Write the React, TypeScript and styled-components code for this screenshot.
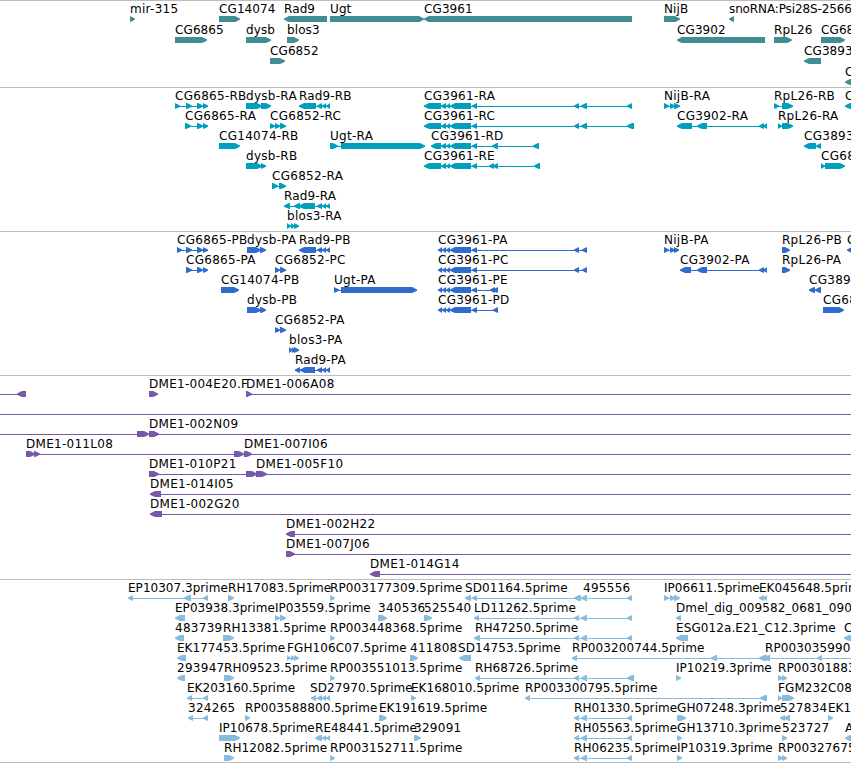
import { FC } from 'react';
import styled, { createGlobalStyle } from 'styled-components';

const Colors = {
    gene: '#408e93',
    transcript: '#009fbf',
    protein: '#306ccd',
    clone: '#7859a9',
    est: '#87bcde',
    border: '#bdbdbd',
    text: '#000000',
};

const GlobalStyle = createGlobalStyle`
body{
    margin:0;
    background-color:#ffffff;
    overflow:hidden;
}
`;

const BrowserWrapper = styled.div`
width:851px;
height:763px;
box-sizing:border-box;
display:flex;
flex-direction:column;
overflow:hidden;
border-bottom:1px solid ${Colors.border};
font-family:"DejaVu Sans", sans-serif;
font-size:12px;
color:${Colors.text};
`;
const TrackSection = styled.section<{ $gap: number }>`
display:flex;
flex-direction:column;
border-top:1px solid ${Colors.border};
padding-bottom:${p => p.$gap}px;
`;
const TrackRow = styled.div<{ $height: number }>`
position:relative;
height:${p => p.$height}px;
`;
const FeatureLabel = styled.span<{ $x: number; $spacing: number }>`
position:absolute;
top:1px;
left:${p => p.$x}px;
line-height:14px;
white-space:pre;
letter-spacing:${p => p.$spacing}px;
`;
const FeatureLane = styled.svg`
position:absolute;
top:15px;
left:0;
display:block;
`;

type Direction = '>' | '<';

// label, label x, direction, flat list of block start/end positions
type Feature = [string, number, Direction, number[]];

interface ITrack {
    color: string;
    rowHeight: number;
    gap: number;
    rows: Feature[][];
}

const rad9 = [317, 322, 322, 326, 326, 330];
const cg3961 = [441, 446, 446, 450, 450, 471, 472, 477];
const cg3961p = [438, 442, 442, 446, 446, 450, 450, 471, 472, 477];
const estTail = [574, 579, 581, 587, 627, 632];

const tracks: ITrack[] = [
    {
        color: Colors.gene,
        rowHeight: 21,
        gap: 2,
        rows: [
            [
                ['mir-315', 130, '>', [130, 135]],
                ['CG14074', 219, '>', [219, 240]],
                ['Rad9', 284, '<', [284, 327]],
                ['Ugt', 330, '>', [330, 424]],
                ['CG3961', 424, '<', [424, 632]],
                ['NijB', 664, '>', [664, 680]],
                ['snoRNA:Psi28S-2566', 729, '<', [729, 734]],
            ],
            [
                ['CG6865', 175, '>', [175, 207]],
                ['dysb', 246, '>', [246, 271]],
                ['blos3', 287, '>', [287, 299]],
                ['CG3902', 677, '<', [677, 765]],
                ['RpL26', 774, '>', [774, 792]],
                ['CG6876', 821, '>', [821, 845]],
            ],
            [
                ['CG6852', 270, '>', [270, 285]],
                ['CG3893', 804, '<', [804, 821]],
            ],
            [['CG3889', 845, '<', [845, 870]]],
        ],
    },
    {
        color: Colors.transcript,
        rowHeight: 20,
        gap: 3,
        rows: [
            [
                ['CG6865-RB', 175, '>', [175, 180, 186, 192, 197, 203, 203, 208]],
                ['dysb-RA', 246, '>', [246, 262, 261, 271]],
                ['Rad9-RB', 299, '<', [299, 316, ...rad9]],
                ['CG3961-RA', 424, '<', [424, 441, ...cg3961, 574, 579, 581, 587, 627, 632]],
                ['NijB-RA', 664, '>', [664, 669, 670, 675, 674, 680]],
                ['RpL26-RB', 774, '>', [774, 779, 782, 793]],
                ['CG3889-RA', 845, '<', [845, 870]],
            ],
            [
                ['CG6865-RA', 185, '>', [185, 191, 197, 203, 203, 208]],
                ['CG6852-RC', 270, '>', [270, 275, 275, 280, 280, 286]],
                ['CG3961-RC', 424, '<', [424, 441, ...cg3961, 574, 579, 581, 587, 627, 634]],
                ['CG3902-RA', 677, '<', [677, 692, 697, 707, 759, 764, 763, 767]],
                ['RpL26-RA', 778, '>', [778, 782, 782, 793]],
            ],
            [
                ['CG14074-RB', 219, '>', [219, 240]],
                ['Ugt-RA', 330, '>', [330, 338, 341, 425]],
                ['CG3961-RD', 431, '<', [431, 441, ...cg3961, 492, 498, 533, 539]],
                ['CG3893-RA', 804, '<', [804, 816, 816, 821]],
            ],
            [
                ['dysb-RB', 246, '>', [246, 262, 261, 266]],
                ['CG3961-RE', 424, '<', [424, 441, ...cg3961, 489, 494, 493, 498, 534, 540]],
                ['CG6876-RA', 821, '>', [821, 825, 825, 845]],
            ],
            [['CG6852-RA', 272, '>', [272, 278, 279, 286]]],
            [['Rad9-RA', 284, '<', [284, 290, 294, 300, 299, 315, ...rad9]]],
            [['blos3-RA', 287, '>', [287, 291, 291, 295, 294, 299]]],
        ],
    },
    {
        color: Colors.protein,
        rowHeight: 20,
        gap: 3,
        rows: [
            [
                ['CG6865-PB', 177, '>', [177, 182, 186, 192, 197, 203, 203, 208]],
                ['dysb-PA', 247, '>', [247, 261, 260, 266]],
                ['Rad9-PB', 299, '<', [299, 316, ...rad9]],
                ['CG3961-PA', 438, '<', [...cg3961p, 574, 579, 582, 587]],
                ['NijB-PA', 664, '>', [664, 669, 670, 675, 674, 679]],
                ['RpL26-PB', 782, '>', [782, 790]],
                ['CG3889-PA', 847, '<', [847, 870]],
            ],
            [
                ['CG6865-PA', 186, '>', [186, 192, 197, 203, 203, 208]],
                ['CG6852-PC', 275, '>', [275, 280, 280, 286]],
                ['CG3961-PC', 438, '<', [...cg3961p, 574, 579, 582, 587]],
                ['CG3902-PA', 680, '<', [680, 691, 697, 707, 759, 764, 763, 767]],
                ['RpL26-PA', 782, '>', [782, 790]],
            ],
            [
                ['CG14074-PB', 221, '>', [221, 239]],
                ['Ugt-PA', 334, '>', [334, 339, 341, 417]],
                ['CG3961-PE', 438, '<', [...cg3961p, 490, 495, 493, 498]],
                ['CG3893-PA', 809, '<', [809, 815, 815, 821]],
            ],
            [
                ['dysb-PB', 247, '>', [247, 261, 260, 266]],
                ['CG3961-PD', 438, '<', [...cg3961p, 493, 498]],
                ['CG6876-PA', 823, '>', [823, 844]],
            ],
            [['CG6852-PA', 275, '>', [275, 280, 280, 286]]],
            [['blos3-PA', 289, '>', [289, 293, 292, 296, 294, 299]]],
            [['Rad9-PA', 295, '<', [295, 300, 300, 315, ...rad9]]],
        ],
    },
    {
        color: Colors.clone,
        rowHeight: 20,
        gap: 3,
        rows: [
            [
                ['', 0, '<', [-20, -10, 17, 26]],
                ['DME1-004E20.F', 149, '>', [149, 158]],
                ['DME1-006A08', 246, '>', [246, 252, 900, 910]],
            ],
            [['', 0, '>', [-20, -10, 900, 910]]],
            [
                ['', 0, '>', [-20, -10, 137, 149]],
                ['DME1-002N09', 149, '>', [149, 159, 900, 910]],
            ],
            [
                ['DME1-011L08', 26, '>', [26, 35, 34, 40, 234, 244]],
                ['DME1-007I06', 244, '>', [244, 252, 900, 910]],
            ],
            [
                ['DME1-010P21', 149, '>', [149, 159, 246, 257]],
                ['DME1-005F10', 256, '>', [256, 267, 900, 910]],
            ],
            [['DME1-014I05', 150, '<', [150, 161, 900, 910]]],
            [['DME1-002G20', 150, '<', [150, 162, 900, 910]]],
            [['DME1-002H22', 286, '<', [286, 295, 900, 910]]],
            [['DME1-007J06', 286, '>', [286, 295, 900, 910]]],
            [['DME1-014G14', 370, '<', [370, 380, 900, 910]]],
        ],
    },
    {
        color: Colors.est,
        rowHeight: 20,
        gap: 2,
        rows: [
            [
                ['EP10307.3prime', 128, '<', [128, 133, 184, 191, 203, 208]],
                ['RH17083.5prime', 228, '>', [228, 234]],
                ['RP003177309.5prime', 330, '>', [330, 335]],
                ['SD01164.5prime', 465, '<', [465, 471, 472, 477, 574, 581]],
                ['495556', 583, '<', [581, 587, 627, 632]],
                ['IP06611.5prime', 664, '>', [664, 669, 670, 675, 674, 680]],
                ['EK045648.5prime', 759, '<', [759, 764, 763, 767]],
            ],
            [
                ['EP03938.3prime', 175, '<', [175, 185]],
                ['IP03559.5prime', 275, '>', [275, 280, 280, 286]],
                ['340536', 378, '>', [378, 387]],
                ['525540', 424, '>', [424, 432]],
                ['LD11262.5prime', 474, '<', [474, 479, ...estTail]],
                ['Dmel_dig_009582_0681_0909', 676, '<', [676, 681]],
            ],
            [
                ['483739', 175, '<', [175, 184]],
                ['RH13381.5prime', 223, '>', [223, 234]],
                ['RP003448368.5prime', 330, '>', [330, 335]],
                ['RH47250.5prime', 475, '<', [474, 480, ...estTail]],
                ['ESG012a.E21_C12.3prime', 676, '<', [676, 688]],
                ['CO332', 844, '<', [844, 870]],
            ],
            [
                ['EK177453.5prime', 177, '<', [177, 186]],
                ['FGH106C07.5prime', 287, '>', [287, 291, 291, 295, 294, 299]],
                ['411808', 410, '>', [410, 418]],
                ['SD14753.5prime', 458, '<', [459, 471]],
                ['RP003200744.5prime', 572, '<', [572, 577, 711, 717, 759, 767]],
                ['RP003035990.5prime', 765, '<', [764, 770, 817, 822, 900, 910]],
            ],
            [
                ['293947', 177, '<', [177, 185]],
                ['RH09523.5prime', 224, '>', [224, 234]],
                ['RP003551013.5prime', 330, '>', [330, 335]],
                ['RH68726.5prime', 475, '<', [475, 480, 574, 579, 581, 587, 627, 634]],
                ['IP10219.3prime', 676, '>', [676, 681]],
                ['RP003018837.5prime', 778, '>', [778, 783, 782, 787]],
            ],
            [
                ['EK203160.5prime', 187, '<', [187, 192, 203, 208]],
                ['SD27970.5prime', 310, '<', [311, 316, ...rad9]],
                ['EK168010.5prime', 411, '>', [411, 416]],
                ['RP003300795.5prime', 525, '<', [525, 530, 760, 767]],
                ['FGM232C08.5prime', 778, '>', [778, 782, 782, 794]],
            ],
            [
                ['324265', 188, '<', [188, 193, 203, 208]],
                ['RP003588800.5prime', 245, '>', [245, 250]],
                ['EK191619.5prime', 379, '>', [379, 387]],
                ['RH01330.5prime', 574, '<', estTail],
                ['GH07248.3prime', 677, '>', [677, 686]],
                ['527834', 780, '<', [780, 785, 784, 790]],
                ['EK150', 828, '>', [828, 833]],
            ],
            [
                ['IP10678.5prime', 219, '>', [219, 240]],
                ['RE48441.5prime', 315, '<', [315, 322, 322, 326, 326, 330]],
                ['329091', 414, '>', [414, 421]],
                ['RH05563.5prime', 574, '<', estTail],
                ['GH13710.3prime', 677, '>', [677, 682]],
                ['523727', 782, '>', [782, 787]],
                ['AT08', 845, '<', [845, 870]],
            ],
            [
                ['RH12082.5prime', 224, '>', [224, 234]],
                ['RP003152711.5prime', 330, '>', [330, 335]],
                ['RH06235.5prime', 574, '<', estTail],
                ['IP10319.3prime', 677, '>', [677, 682]],
                ['RP003276752.5prime', 778, '>', [778, 783, 782, 787]],
            ],
        ],
    },
];

const labelSpacing = (label: string) => {
    if (label.startsWith('sno')) {
        return -0.12;
    }
    if (label.startsWith('Rad9-')) {
        return 0.15;
    }
    if (label.includes('-') || /^\d+$/.test(label)) {
        return 0.28;
    }
    if (/^[EI][PK]/.test(label)) {
        return 0.03;
    }
    return 0.1;
};

const blockPoints = (start: number, end: number, direction: Direction) => {
    const tip = Math.min(5, end - start);
    if (direction === '>') {
        return `${start},0 ${end - tip},0 ${end - 2},1.4 ${end},2.6 ${end},3.6 ${end - 2},4.8 ${end - tip},6 ${start},6`;
    }
    return `${end},0 ${start + tip},0 ${start + 2},1.4 ${start},2.6 ${start},3.6 ${start + 2},4.8 ${start + tip},6 ${end},6`;
};

const FeatureGlyph: FC<{ direction: Direction; blocks: number[]; color: string }> = ({ direction, blocks, color }) => {
    const pairs: number[][] = [];
    for (let i = 0; i < blocks.length; i += 2) {
        pairs.push([blocks[i], blocks[i + 1]]);
    }
    const first = blocks[0];
    const last = blocks[blocks.length - 1];

    return (
        <g fill={color}>
            {pairs.length > 1 && <rect x={first} y={3} width={last - first} height={1} />}
            {pairs.map(([start, end]) => (
                <polygon key={start} points={blockPoints(start, end, direction)} />
            ))}
        </g>
    );
};

const Track: FC<{ track: ITrack }> = ({ track }) => (
    <TrackSection $gap={track.gap}>
        {track.rows.map((row, i) => (
            <TrackRow key={i} $height={track.rowHeight}>
                <FeatureLane width={851} height={6}>
                    {row.map(([label, , direction, blocks]) => (
                        <FeatureGlyph key={label} direction={direction} blocks={blocks} color={track.color} />
                    ))}
                </FeatureLane>
                {row.map(([label, x]) => label && (
                    <FeatureLabel key={label} $x={x} $spacing={labelSpacing(label)}>{label}</FeatureLabel>
                ))}
            </TrackRow>
        ))}
    </TrackSection>
);

const App: FC = () => {
    return (
        <BrowserWrapper>
            <GlobalStyle />
            {tracks.map((track) => (
                <Track key={track.color} track={track} />
            ))}
        </BrowserWrapper>
    );
};

export default App;
